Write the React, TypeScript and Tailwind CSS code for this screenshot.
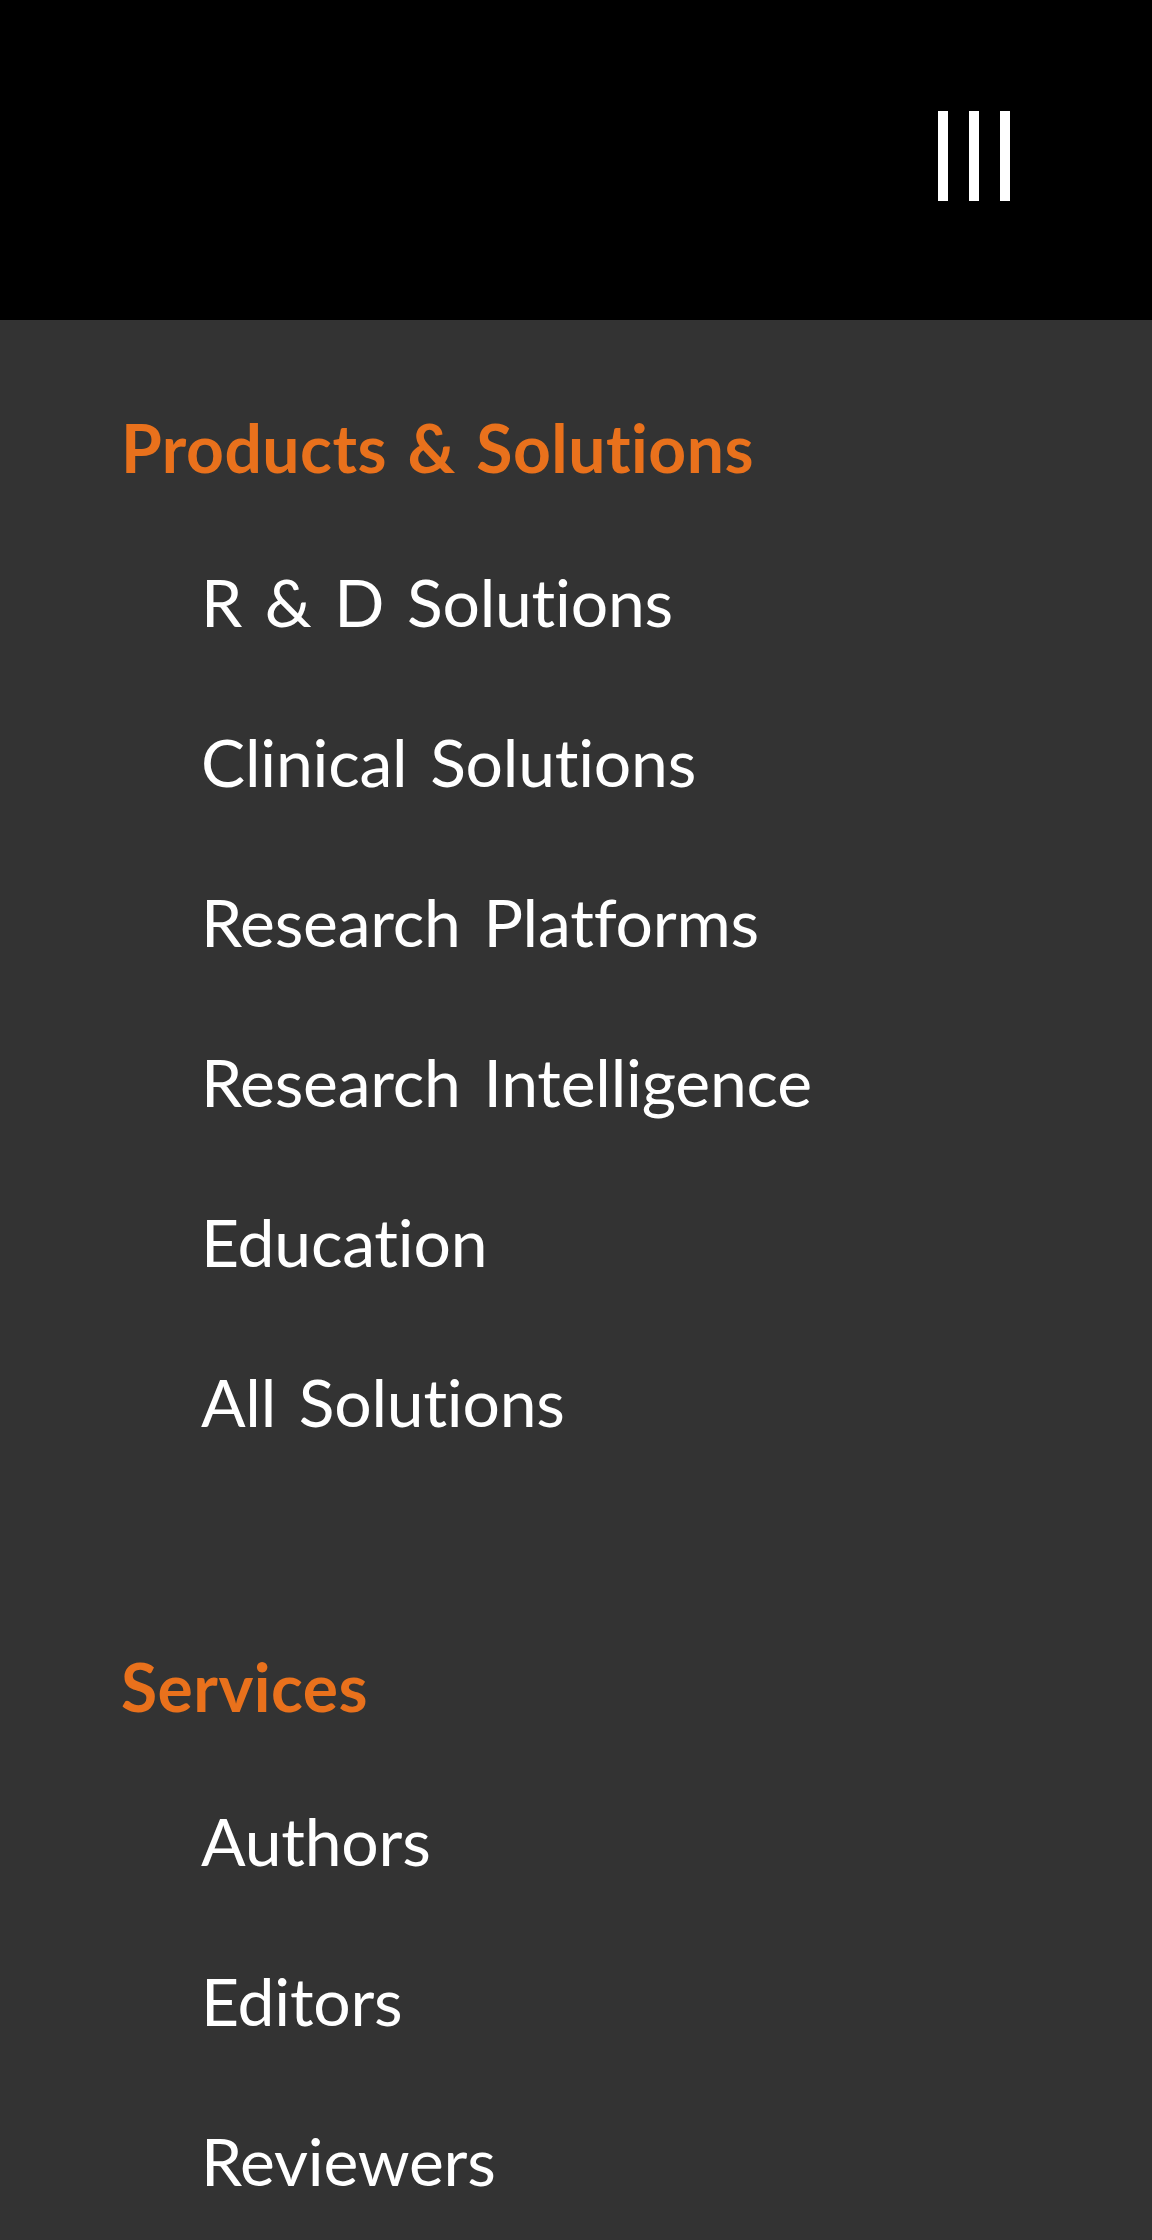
import React from "react";

const sections = [
  {
    title: "Products & Solutions",
    items: [
      "R & D Solutions",
      "Clinical Solutions",
      "Research Platforms",
      "Research Intelligence",
      "Education",
      "All Solutions",
    ],
  },
  {
    title: "Services",
    items: ["Authors", "Editors", "Reviewers"],
  },
];

export default function App() {
  return (
    <div
      className="min-h-screen w-full bg-[#333333]"
      style={{ fontFamily: "Lato, 'Noto Sans', sans-serif" }}
    >
      <header className="flex h-[320px] w-full items-center justify-end bg-black pr-[142px] pb-[9px]">
        <button aria-label="Menu" className="flex h-[90px] items-stretch gap-[21px]">
          <span className="block w-[10px] bg-white" />
          <span className="block w-[10px] bg-white" />
          <span className="block w-[10px] bg-white" />
        </button>
      </header>
      <nav className="pt-[54px]">
        {sections.map((s, i) => (
          <div key={s.title} className={i === 0 ? "" : "mt-[131px]"}>
            <h2 className="pl-[121px] text-[66px] font-bold leading-[148px] tracking-[0.5px] [word-spacing:4px] text-[#e9711c]">
              {s.title}
            </h2>
            <ul>
              {s.items.map((it) => (
                <li
                  key={it}
                  className="pl-[201px] text-[66px] font-normal leading-[160px] tracking-[-0.2px] [word-spacing:6px] text-white"
                >
                  {it}
                </li>
              ))}
            </ul>
          </div>
        ))}
      </nav>
    </div>
  );
}
